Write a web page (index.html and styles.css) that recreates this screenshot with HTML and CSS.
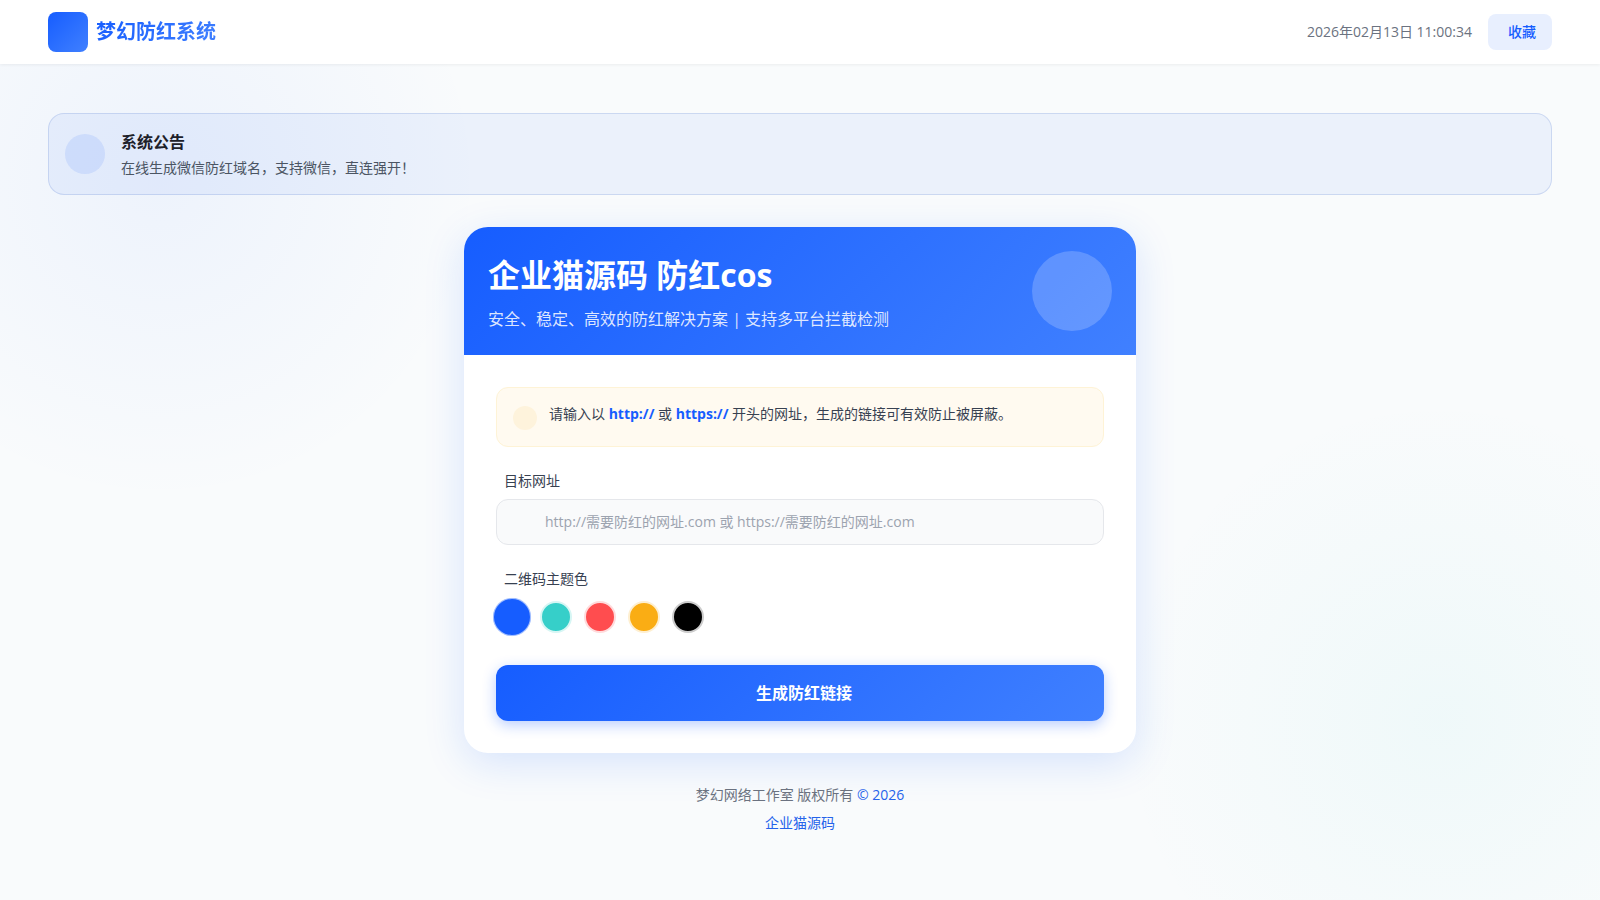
FILE: index.html
```
<!DOCTYPE html>
<html lang="zh-CN">
<head>
    <meta charset="utf-8">
    <meta name="viewport" content="width=device-width, initial-scale=1.0">
    <title>梦幻防红系统</title>
    <link rel="stylesheet" href="styles.css">
</head>
<body>
    <header class="header">
        <div class="brand">
            <div class="brand-logo"></div>
            <span class="brand-name">梦幻防红系统</span>
        </div>
        <div class="header-right">
            <span class="time" id="time">2026年02月13日 11:00:34</span>
            <button type="button" class="btn-fav">收藏</button>
        </div>
    </header>

    <main class="main">
        <section class="notice">
            <div class="notice-icon"></div>
            <div>
                <h3 class="notice-title">系统公告</h3>
                <p class="notice-text">在线生成微信防红域名，支持微信，直连强开！</p>
            </div>
        </section>

        <section class="card">
            <div class="card-header">
                <div>
                    <h1 class="card-title">企业猫源码 防红cos</h1>
                    <p class="card-desc">安全、稳定、高效的防红解决方案 | 支持多平台拦截检测</p>
                </div>
                <div class="card-badge"></div>
            </div>
            <form class="card-body" onsubmit="return false">
                <div class="tip">
                    <div class="tip-icon"></div>
                    <p class="tip-text">请输入以 <b>http://</b> 或 <b>https://</b> 开头的网址，生成的链接可有效防止被屏蔽。</p>
                </div>

                <div class="field">
                    <label class="label" for="url">目标网址</label>
                    <input class="input" type="text" id="url" placeholder="http://需要防红的网址.com 或 https://需要防红的网址.com">
                </div>

                <fieldset class="colors">
                    <legend class="label">二维码主题色</legend>
                    <div class="color-list">
                        <input type="radio" name="color" class="color blue" value="165DFF" aria-label="蓝色" checked>
                        <input type="radio" name="color" class="color teal" value="36CFC9" aria-label="青色">
                        <input type="radio" name="color" class="color red" value="FF4D4F" aria-label="红色">
                        <input type="radio" name="color" class="color orange" value="FAAD14" aria-label="橙色">
                        <input type="radio" name="color" class="color black" value="000000" aria-label="黑色">
                    </div>
                </fieldset>

                <button type="submit" class="btn-submit">生成防红链接</button>
            </form>
        </section>

        <footer class="footer">
            <p>梦幻网络工作室 版权所有 <a href="#">© 2026</a></p>
            <p><a href="#">企业猫源码</a></p>
        </footer>
    </main>
</body>
</html>
```
FILE: styles.css
```
* {
    box-sizing: border-box;
    margin: 0;
    padding: 0;
}

body {
    min-height: 100vh;
    font-family: "Open Sans", "Noto Sans CJK SC", sans-serif;
    font-size: 14px;
    line-height: 20px;
    color: #4b5563;
    background-color: #f9fbfc;
    background-image:
        radial-gradient(circle at 10% 20%, rgba(22, 93, 255, 0.05) 0%, transparent 20%),
        radial-gradient(circle at 90% 80%, rgba(54, 207, 201, 0.05) 0%, transparent 20%);
}

button,
input {
    font-family: inherit;
    font-size: 14px;
}

a {
    color: #2563eb;
    text-decoration: none;
}

/* 顶部导航 */
.header {
    display: flex;
    align-items: center;
    justify-content: space-between;
    height: 64px;
    padding: 0 48px;
    background: #fff;
    box-shadow: 0 1px 3px rgba(0, 0, 0, 0.06);
}

.brand {
    display: flex;
    align-items: center;
    gap: 8px;
}

.brand-logo {
    width: 40px;
    height: 40px;
    border-radius: 8px;
    background: linear-gradient(135deg, #165dff, #4080ff);
}

.brand-name {
    font-size: 20px;
    font-weight: bold;
    line-height: 28px;
    color: transparent;
    background: linear-gradient(135deg, #165dff, #4080ff);
    -webkit-background-clip: text;
    background-clip: text;
}

.header-right {
    display: flex;
    align-items: center;
    gap: 16px;
}

.time {
    color: #6b7280;
}

.btn-fav {
    padding: 8px 16px 8px 20px;
    border: none;
    border-radius: 8px;
    line-height: 20px;
    font-weight: 500;
    color: #165dff;
    background: #e8effe;
    cursor: pointer;
}

.main {
    padding: 49px 48px 48px;
}

/* 公告 */
.notice {
    display: flex;
    align-items: center;
    gap: 16px;
    padding: 16px;
    border: 1px solid rgba(40, 80, 190, 0.16);
    border-radius: 16px;
    background: rgba(22, 93, 230, 0.06);
}

.notice-icon {
    width: 40px;
    height: 40px;
    border-radius: 50%;
    background: rgba(22, 93, 255, 0.1);
}

.notice-title {
    margin-bottom: 4px;
    font-size: 16px;
    line-height: 24px;
    color: #1d2129;
}

/* 主卡片 */
.card {
    max-width: 672px;
    margin: 32px auto;
    border-radius: 24px;
    overflow: hidden;
    background: #fff;
    box-shadow: 0 10px 40px rgba(22, 93, 255, 0.15);
}

.card-header {
    display: flex;
    align-items: center;
    justify-content: space-between;
    padding: 24px;
    color: #fff;
    background: linear-gradient(135deg, #165dff, #4080ff);
}

.card-title {
    margin-bottom: 8px;
    font-size: 32px;
    line-height: 48px;
}

.card-desc {
    font-size: 16px;
    line-height: 24px;
    color: rgba(255, 255, 255, 0.85);
}

.card-badge {
    flex-shrink: 0;
    width: 80px;
    height: 80px;
    border-radius: 50%;
    background: rgba(255, 255, 255, 0.2);
}

.card-body {
    padding: 32px;
}

.tip {
    display: flex;
    align-items: flex-start;
    gap: 12px;
    padding: 16px;
    margin-bottom: 24px;
    border: 1px solid #fef3d6;
    border-radius: 12px;
    background: #fffaf0;
}

.tip-icon {
    flex-shrink: 0;
    width: 24px;
    height: 24px;
    margin-top: 2px;
    border-radius: 50%;
    background: #fef3dc;
}

.tip-text {
    color: #374151;
}

.tip-text b {
    color: #165dff;
}

.field {
    margin-bottom: 24px;
}

.label {
    display: block;
    margin-bottom: 8px;
    padding-left: 8px;
    color: #374151;
}

.input {
    display: block;
    width: 100%;
    padding: 12px 16px 12px 48px;
    border: 1px solid #e5e7eb;
    border-radius: 12px;
    line-height: 20px;
    color: #1d2129;
    background: #f9fafb;
    outline: none;
}

.input::placeholder {
    color: #9ca3af;
}

.input:focus {
    border-color: #165dff;
}

/* 颜色选择 */
.colors {
    margin-bottom: 32px;
    border: none;
}

.color-list {
    display: flex;
    gap: 12px;
    padding-top: 4px;
}

.color {
    appearance: none;
    width: 32px;
    height: 32px;
    border: 2px solid rgba(255, 255, 255, 0.8);
    border-radius: 50%;
    cursor: pointer;
}

.color:checked {
    transform: scale(1.2);
    border: 1px solid rgba(255, 255, 255, 0.6);
}

.blue { background: #165dff; }
.teal { background: #36cfc9; }
.red { background: #ff4d4f; }
.orange { background: #faad14; }
.black { background: #000; }

.btn-submit {
    display: block;
    width: 100%;
    padding: 16px 16px 16px 24px;
    border: none;
    border-radius: 12px;
    font-size: 16px;
    font-weight: bold;
    line-height: 24px;
    color: #fff;
    background: linear-gradient(135deg, #165dff, #4080ff);
    box-shadow: 0 4px 14px rgba(22, 93, 255, 0.3);
    cursor: pointer;
}

/* 底部 */
.footer {
    text-align: center;
    color: #6b7280;
}

.footer p {
    margin-bottom: 8px;
}
```
